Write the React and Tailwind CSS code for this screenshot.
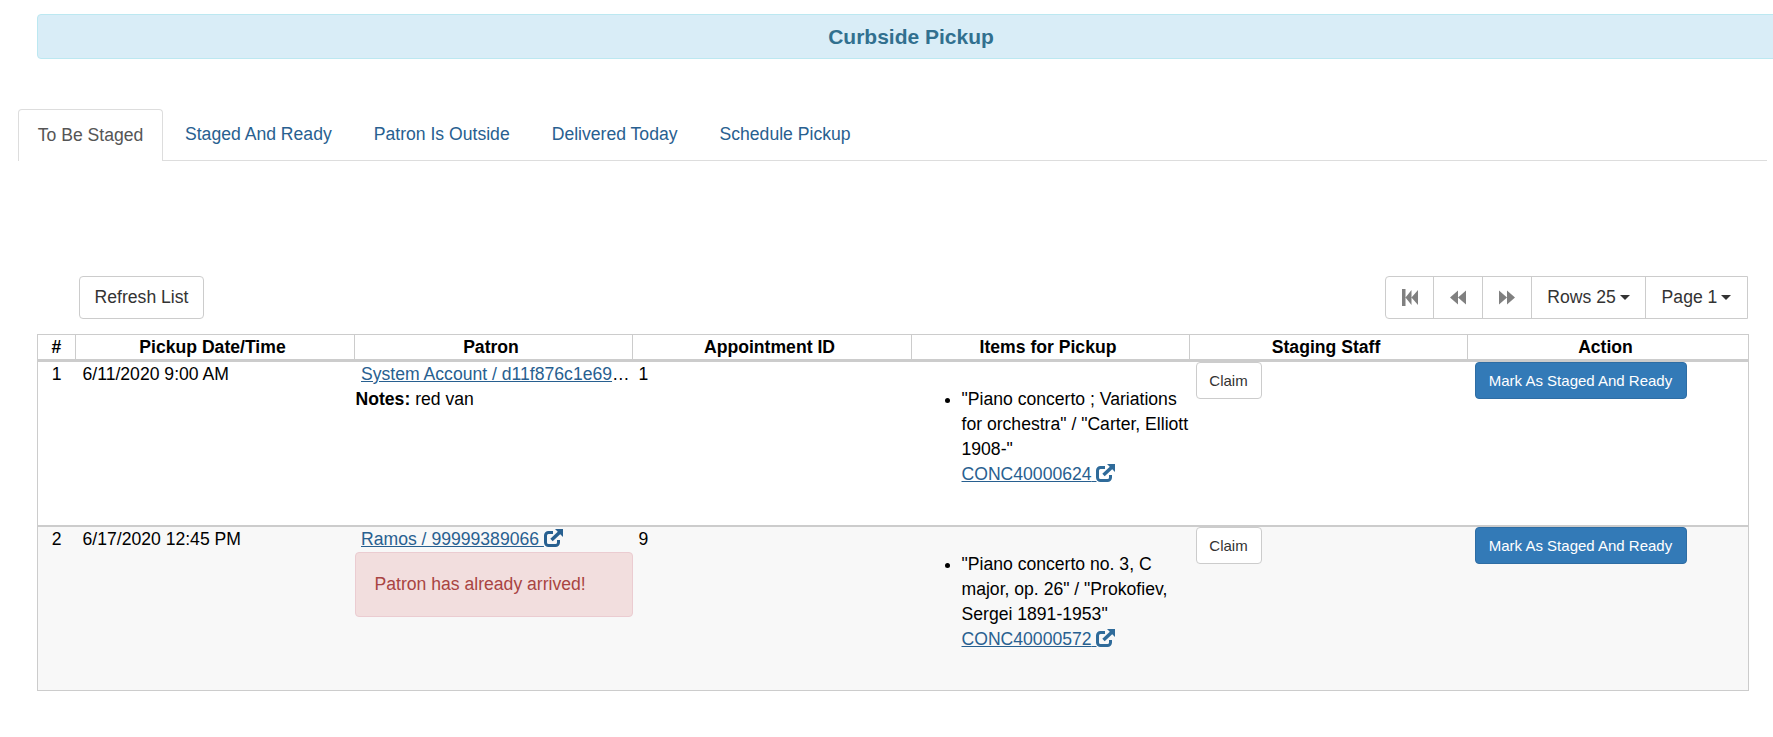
import React from "react";

const Share = ({ className = "" }) => (
  <svg viewBox="0 0 19 18" className={`inline-block w-[19px] h-[18px] align-[-2px] ${className}`}>
    <path d="M9 3.500H4.500A3 3 0 0 0 1.500 6.500V13.500A3 3 0 0 0 4.500 16.500H11.500A3 3 0 0 0 14.500 13.500V11" fill="none" stroke="currentColor" strokeWidth="3" />
    <path d="M11 0H19V8z" fill="currentColor" />
    <path d="M15.500 3.500L7.500 11" fill="none" stroke="currentColor" strokeWidth="3.500" />
  </svg>
);

const Ico = ({ d }) => (
  <svg viewBox="0 0 18 17" className="w-[18px] h-[17px] text-[#808080]" fill="currentColor">
    <path d={d} />
  </svg>
);

const pagerBtn = "flex items-center justify-center border-r border-[#ccc]";

function Row({ n, date, patron, extra, apt, lines, code, shaded, h }) {
  return (
    <tr className={`align-top border-[#ccc] ${shaded ? "bg-[#f8f8f8] border-b" : "bg-white border-b-2"}`}>
      <td className={`text-center ${h}`}>{n}</td>
      <td className="pl-[7px]">{date}</td>
      <td>
        {patron}
        {extra}
      </td>
      <td className="pl-[6px]">{apt}</td>
      <td className="pl-[51px] pr-0">
        <ul className="list-disc mt-[25px] -ml-px">
          <li>
            {lines.map((l, i) => (
              <div key={i} className="whitespace-nowrap">{l}</div>
            ))}
            <a className="text-[#286090] underline whitespace-nowrap">{code} <Share className="text-[#2f6b9a]" /></a>
          </li>
        </ul>
      </td>
      <td className="pl-[6px]">
        <button className="w-[66px] h-[37px] block text-[15px] text-[#333] bg-white border border-[#ccc] rounded">Claim</button>
      </td>
      <td className="pl-[7px]">
        <button className="w-[212px] h-[37px] block text-[15px] text-white bg-[#337ab7] border border-[#2e6da4] rounded">Mark As Staged And Ready</button>
      </td>
    </tr>
  );
}

export default function App() {
  return (
    <div className="w-[1773px] h-[737px] overflow-hidden bg-white text-[17.6px] leading-[25px] text-black font-['Liberation_Sans',Arial,sans-serif]">
      <div className="pt-[14px] pl-[37px]">
        <div className="w-[1748px] h-[45px] flex items-center justify-center bg-[#d9edf7] border border-[#bce8f1] rounded text-[21px] font-bold text-[#31708f]">
          Curbside Pickup
        </div>
      </div>

      <div className="mt-[50px] ml-[18px] w-[1749px] h-[52px] flex border-b border-[#ddd]">
        <div className="w-[145px] h-[52px] flex items-center justify-center bg-white border border-b-0 border-[#ddd] rounded-t text-[#555]">To Be Staged</div>
        <div className="flex items-center text-[#286090]">
          <span className="ml-[22px]">Staged And Ready</span>
          <span className="ml-[42px]">Patron Is Outside</span>
          <span className="ml-[42px]">Delivered Today</span>
          <span className="ml-[42px]">Schedule Pickup</span>
        </div>
      </div>

      <div className="mt-[115px] ml-[79px] w-[1669px] h-[43px] flex justify-between text-[#333]">
        <button className="w-[125px] h-[43px] border border-[#ccc] rounded bg-white">Refresh List</button>
        <div className="flex h-[43px] border border-[#ccc] rounded-l">
          <div className={`${pagerBtn} w-[48px]`}><Ico d="M1 0h3.500v17H1zM4.500 8.500L10.500 1v15zM10.500 8.500L17 1v15z" /></div>
          <div className={`${pagerBtn} w-[49px]`}><Ico d="M1 8.500L9 1.500v14zM9 8.500L17 1.500v14z" /></div>
          <div className={`${pagerBtn} w-[49px]`}><Ico d="M9 8.500L1 1.500v14zM17 8.500L9 1.500v14z" /></div>
          <div className={`${pagerBtn} w-[114px] gap-1`}>Rows 25<span className="border-x-[5px] border-x-transparent border-t-[5px] border-t-[#333]" /></div>
          <div className="flex items-center justify-center w-[101px] gap-1">Page 1<span className="border-x-[5px] border-x-transparent border-t-[5px] border-t-[#333]" /></div>
        </div>
      </div>

      <table className="mt-[15px] ml-[37px] w-[1711px] table-fixed border-collapse border border-[#ccc]">
        <colgroup>
          <col className="w-[38px]" />
          <col className="w-[279px]" />
          <col className="w-[278px]" />
          <col className="w-[279px]" />
          <col className="w-[278px]" />
          <col className="w-[278px]" />
          <col className="w-[281px]" />
        </colgroup>
        <thead>
          <tr className="h-[26px] border-b-[3px] border-[#ccc]">
            <th className="font-bold text-center border-r border-[#ccc] p-0 leading-[24px]">#</th>
            {["Pickup Date/Time", "Patron", "Appointment ID", "Items for Pickup", "Staging Staff", "Action"].map((t) => (
              <th key={t} className="font-bold text-center border-r border-[#ccc] p-0 pr-[5px] leading-[24px]">{t}</th>
            ))}
          </tr>
        </thead>
        <tbody>
          <Row
            n="1"
            h="h-[165px]"
            date="6/11/2020 9:00 AM"
            patron={
              <div className="pl-[6.5px] pr-[2px] truncate">
                <a className="text-[#286090] underline">System Account / d11f876c1e69ab23</a>
              </div>
            }
            extra={<div className="pl-px"><b>Notes:</b> red van</div>}
            apt="1"
            lines={['"Piano concerto ; Variations', 'for orchestra" / "Carter, Elliott', '1908-"']}
            code="CONC40000624"
          />
          <Row
            n="2"
            h="h-[165px]"
            shaded
            date="6/17/2020 12:45 PM"
            patron={
              <div className="pl-[6.5px]">
                <a className="text-[#286090] underline whitespace-nowrap">Ramos / 99999389066 <Share className="text-[#286090]" /></a>
              </div>
            }
            extra={
              <div className="h-[65px] w-[278px] flex items-center pl-[19px] bg-[#f2dede] border border-[#ebccd1] rounded text-[#a94442]">
                Patron has already arrived!
              </div>
            }
            apt="9"
            lines={['"Piano concerto no. 3, C', 'major, op. 26" / "Prokofiev,', 'Sergei 1891-1953"']}
            code="CONC40000572"
          />
        </tbody>
      </table>
    </div>
  );
}
